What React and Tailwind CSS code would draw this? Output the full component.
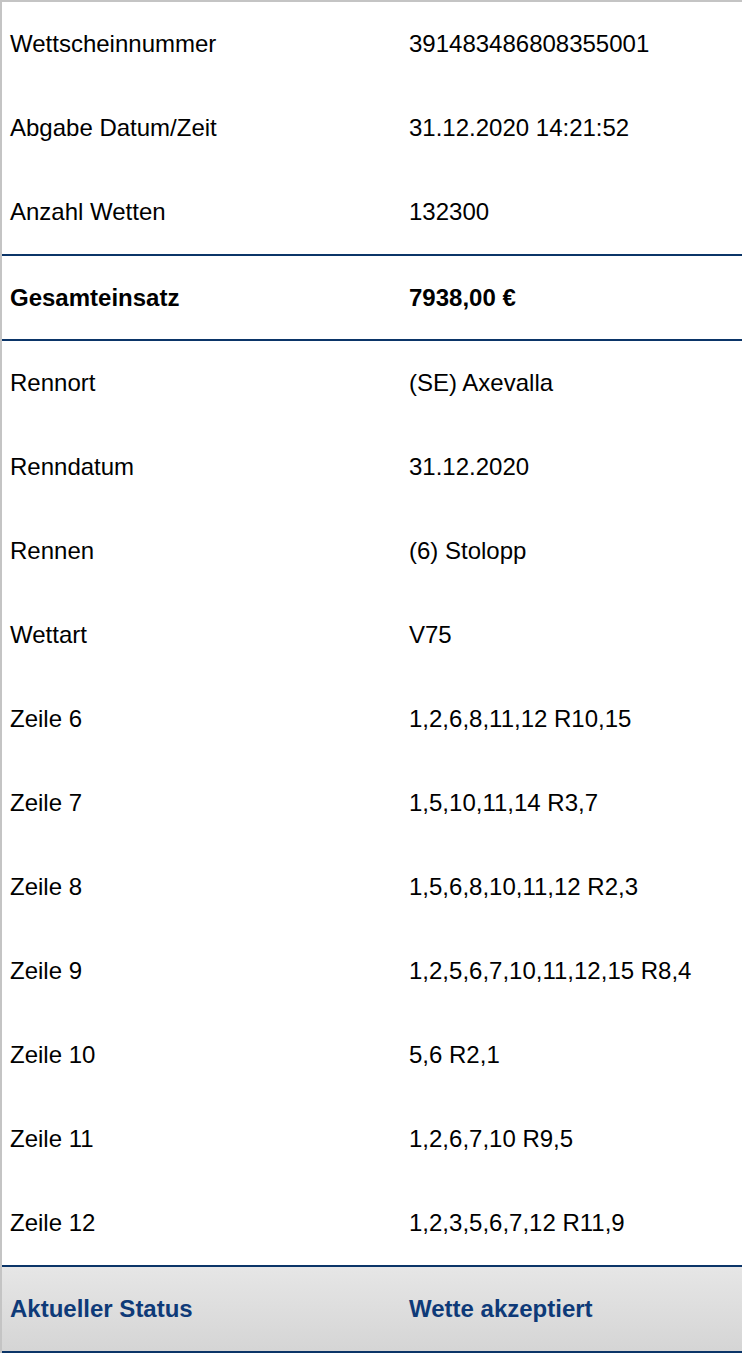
const TOP = [
  ['Wettscheinnummer', '391483486808355001'],
  ['Abgabe Datum/Zeit', '31.12.2020 14:21:52'],
  ['Anzahl Wetten', '132300'],
]

const DETAILS = [
  ['Rennort', '(SE) Axevalla'],
  ['Renndatum', '31.12.2020'],
  ['Rennen', '(6) Stolopp'],
  ['Wettart', 'V75'],
  ['Zeile 6', '1,2,6,8,11,12 R10,15'],
  ['Zeile 7', '1,5,10,11,14 R3,7'],
  ['Zeile 8', '1,5,6,8,10,11,12 R2,3'],
  ['Zeile 9', '1,2,5,6,7,10,11,12,15 R8,4'],
  ['Zeile 10', '5,6 R2,1'],
  ['Zeile 11', '1,2,6,7,10 R9,5'],
  ['Zeile 12', '1,2,3,5,6,7,12 R11,9'],
]

function Row({ label, value, className = 'h-[84px]' }) {
  return (
    <div className={`flex items-center ${className}`}>
      <div className="w-[399px] shrink-0 pl-2">{label}</div>
      <div className="pl-2">{value}</div>
    </div>
  )
}

export default function App() {
  return (
    <div
      className="min-h-[1356px] bg-white text-[24px] leading-none text-black"
      style={{ fontFamily: '"Liberation Sans", Arial, sans-serif' }}
    >
      <div className="border-t-2 border-l-2 border-[#c4c4c4]">
        {TOP.map(([l, v]) => <Row key={l} label={l} value={v} />)}

        {/* total */}
        <div className="border-y-2 border-[#0b3568] font-bold">
          <Row label="Gesamteinsatz" value="7938,00 €" className="h-[83px]" />
        </div>

        {DETAILS.map(([l, v]) => <Row key={l} label={l} value={v} />)}

        {/* status */}
        <div className="border-y-2 border-[#0b3568] bg-gradient-to-b from-[#e6e6e6] to-[#d5d5d5] font-bold text-[#0e3a78]">
          <Row label="Aktueller Status" value="Wette akzeptiert" />
        </div>
      </div>
    </div>
  )
}
